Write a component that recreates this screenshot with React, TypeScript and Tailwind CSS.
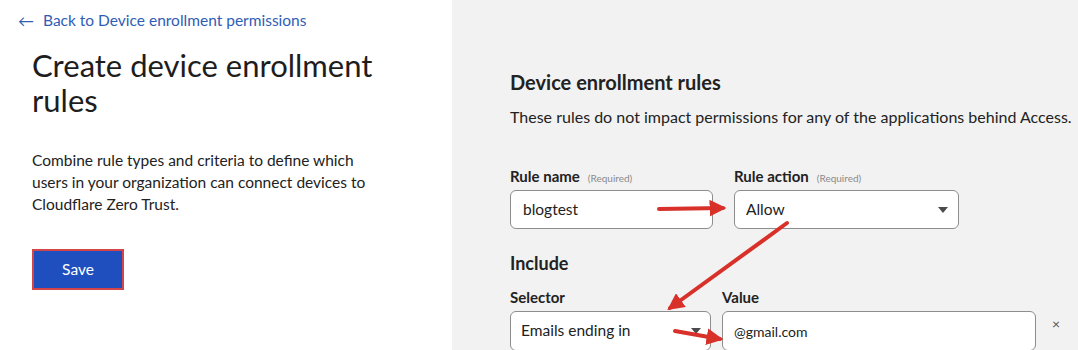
import React from 'react';

const font = { fontFamily: 'Lato, "Noto Sans", sans-serif' };

const Caret = () => (
  <svg width="10" height="6" viewBox="0 0 10 6" className="shrink-0">
    <path d="M0 0 L10 0 L5 6 Z" fill="#4b4b4b" />
  </svg>
);

const Label: React.FC<{ text: string; required?: boolean }> = ({ text, required }) => (
  <div className="flex items-baseline gap-2 mb-[5px] h-[20px]">
    <span className="text-[15px] font-bold text-[#222]">{text}</span>
    {required && <span className="text-[10px] text-[#8a8a8a]">(Required)</span>}
  </div>
);

const Arrows = () => (
  <svg
    className="absolute inset-0 pointer-events-none"
    width="1078"
    height="350"
    viewBox="0 0 1078 350"
  >
    <defs>
      <marker id="head" viewBox="0 0 10 10" refX="8" refY="5" markerWidth="4.2" markerHeight="4.2" orient="auto">
        <path d="M0 0 L10 5 L0 10 Z" fill="#d8312a" />
      </marker>
    </defs>
    <g stroke="#d8312a" strokeWidth="4" strokeLinecap="round" fill="none">
      <line x1="659" y1="209" x2="723" y2="208" markerEnd="url(#head)" />
      <line x1="787" y1="223" x2="670" y2="308" markerEnd="url(#head)" />
      <line x1="675" y1="331" x2="720" y2="339" markerEnd="url(#head)" />
    </g>
  </svg>
);

export default function App() {
  return (
    <div className="relative w-[1078px] h-[350px] overflow-hidden flex bg-white" style={font}>
      {/* left column */}
      <div className="w-[452px] shrink-0 bg-white">
        <a className="flex items-center gap-[9px] pl-[18px] pt-[9px] text-[15.5px] text-[#2f5db5]">
          <span className="text-[16px]">←</span>
          <span>Back to Device enrollment permissions</span>
        </a>
        <div className="pl-[32px] pr-[40px]">
          <h1 className="mt-[15px] text-[31px] leading-[35px] font-normal text-[#1d1d1d]">
            Create device enrollment rules
          </h1>
          <p className="mt-[31px] text-[15.5px] leading-[22px] text-[#222] w-[345px]">
            Combine rule types and criteria to define which users in your organization can connect devices to Cloudflare Zero Trust.
          </p>
          <button className="mt-[34px] w-[92px] h-[41px] bg-[#1f4fbf] border-2 border-[#d4454a] text-white text-[15.5px]">
            Save
          </button>
        </div>
      </div>

      {/* right column */}
      <div className="flex-1 bg-[#f2f2f2] pl-[58px] pt-[70px]">
        <h2 className="text-[20px] font-bold text-[#222] leading-[24px]">Device enrollment rules</h2>
        <p className="mt-[13px] text-[16px] text-[#222] leading-[20px]">
          These rules do not impact permissions for any of the applications behind Access.
        </p>

        <div className="mt-[38px] flex gap-[21px]">
          <div className="w-[203px]">
            <Label text="Rule name" required />
            <div className="h-[39px] rounded-[6px] border border-[#8d8d8d] bg-white flex items-center px-[12px] text-[15.5px] text-[#222]">
              blogtest
            </div>
          </div>
          <div className="w-[225px]">
            <Label text="Rule action" required />
            <div className="h-[39px] rounded-[6px] border border-[#8d8d8d] bg-white flex items-center justify-between pl-[11px] pr-[10px] text-[15.5px] text-[#222]">
              <span>Allow</span>
              <Caret />
            </div>
          </div>
        </div>

        <h3 className="mt-[22px] text-[18px] font-bold text-[#222] leading-[24px]">Include</h3>

        <div className="mt-[11px] flex items-start">
          <div className="w-[201px]">
            <Label text="Selector" />
            <div className="h-[40px] rounded-[6px] border border-[#8d8d8d] bg-white flex items-center justify-between pl-[10px] pr-[9px] text-[15.5px] text-[#222]">
              <span>Emails ending in</span>
              <Caret />
            </div>
          </div>
          <div className="w-[314px] ml-[11px]">
            <Label text="Value" />
            <div className="h-[40px] rounded-[6px] border border-[#8d8d8d] bg-white flex items-center px-[11px] text-[14px] text-[#222]">
              @gmail.com
            </div>
          </div>
          <div className="ml-[16px] mt-[27px] text-[14px] text-[#555]">×</div>
        </div>
      </div>

      <Arrows />
    </div>
  );
}
